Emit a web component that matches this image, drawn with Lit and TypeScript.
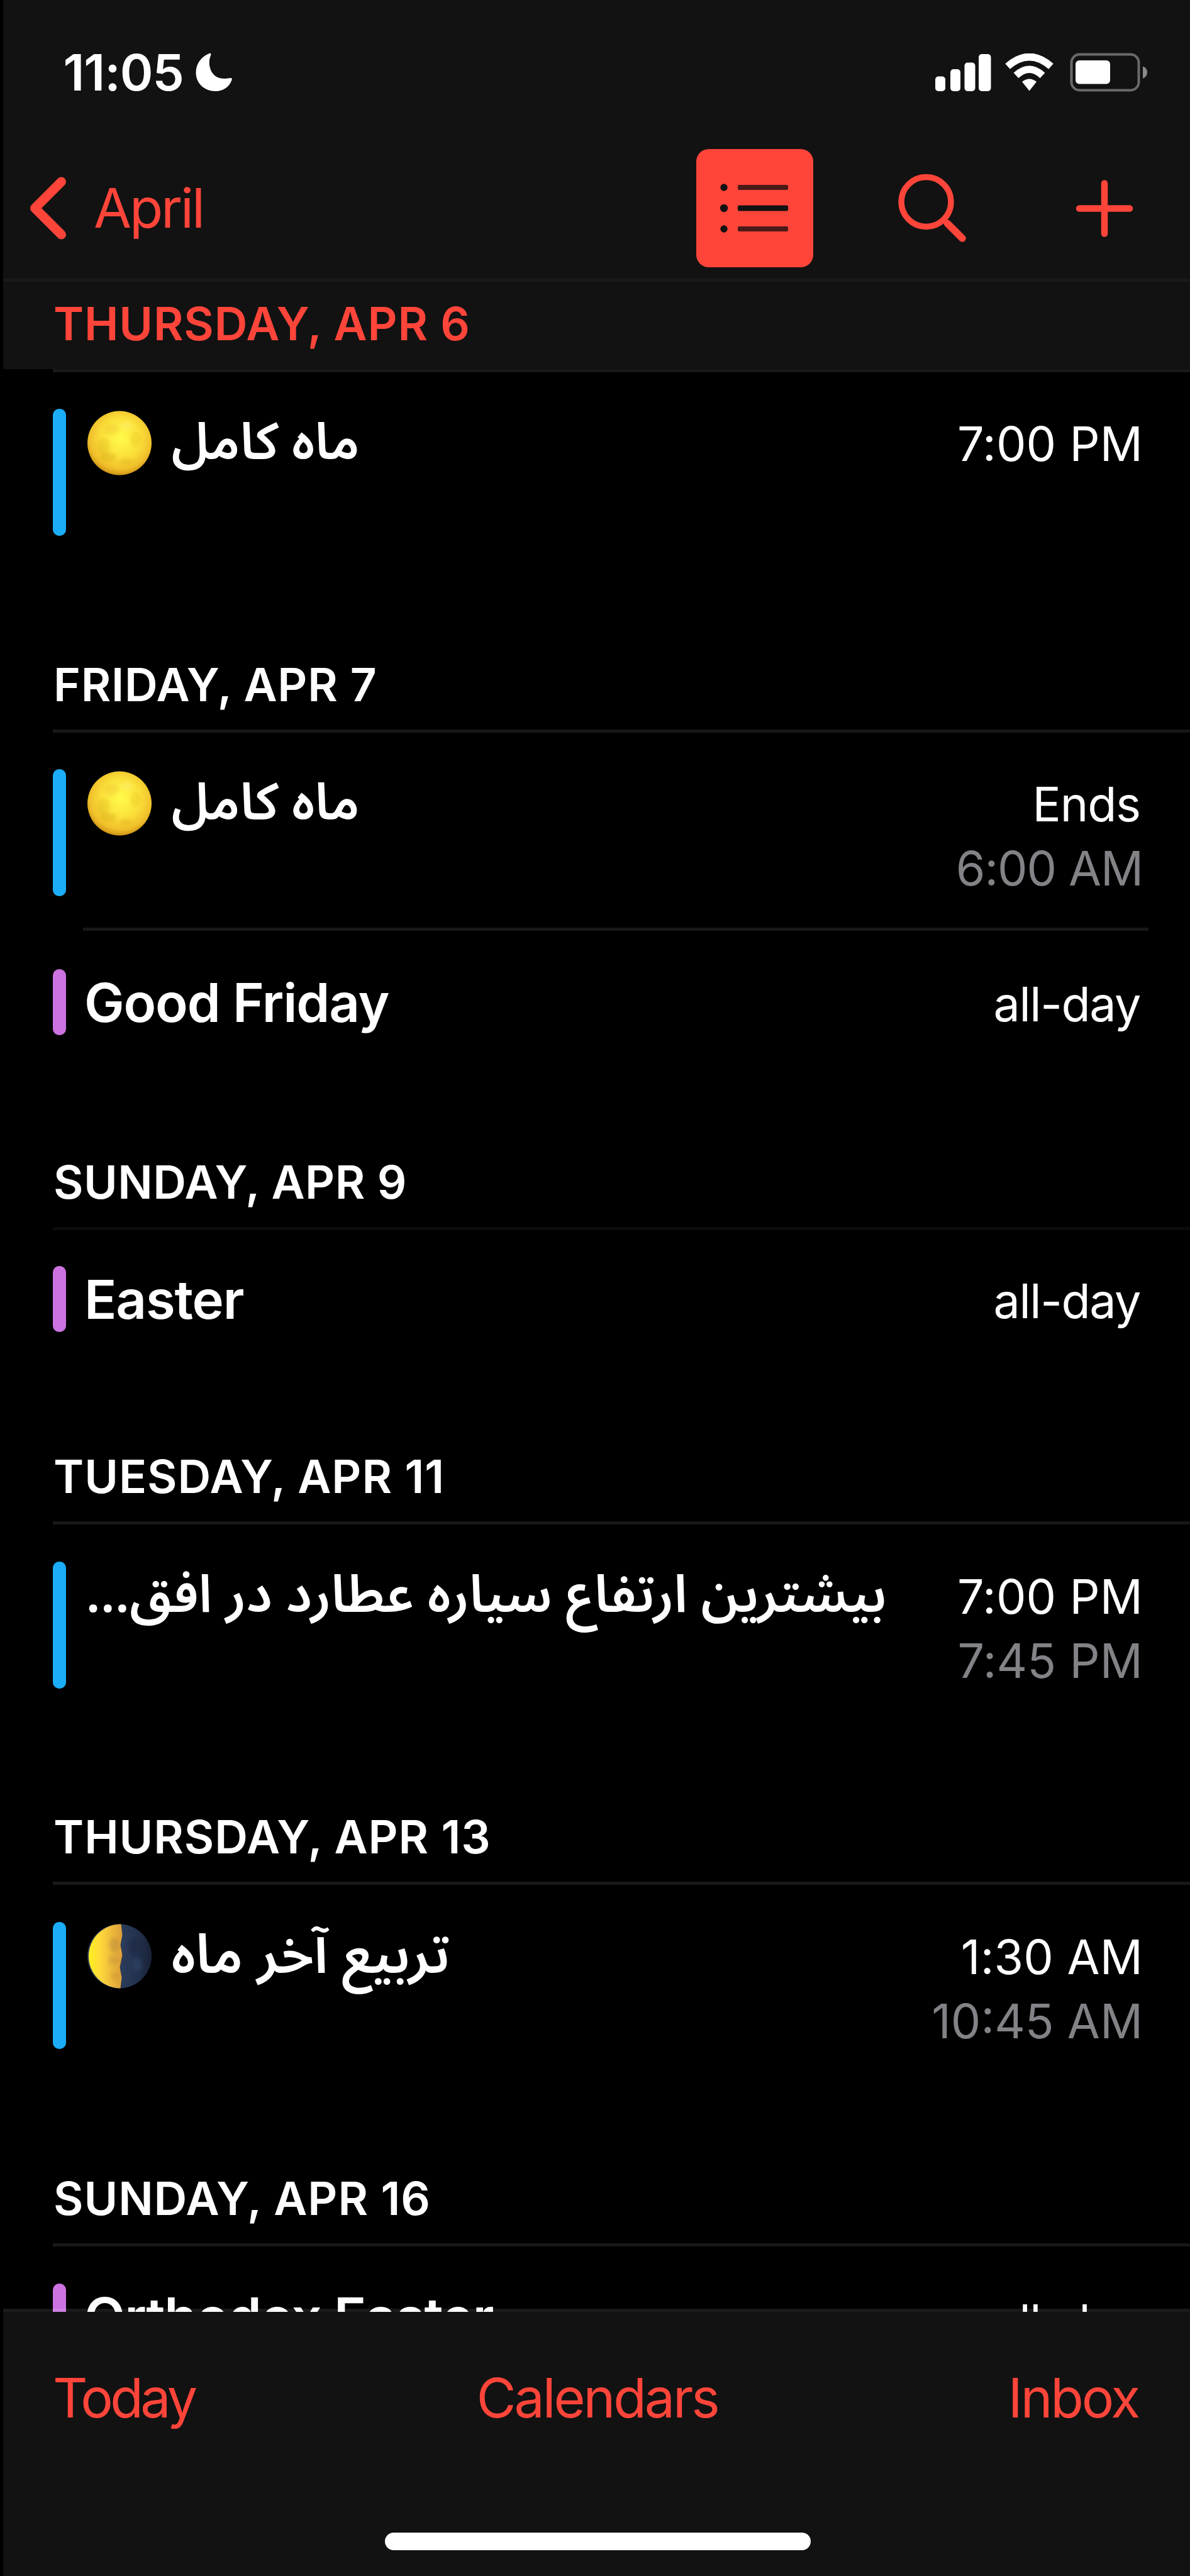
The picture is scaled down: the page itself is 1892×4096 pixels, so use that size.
import { LitElement, html, svg, css, nothing } from "lit";
import { customElement, property } from "lit/decorators.js";
import { classMap } from "lit/directives/class-map.js";
import { styleMap } from "lit/directives/style-map.js";

type Moon = "full" | "last-quarter";

interface TimeLabel {
  text: string;
  tracking: number;
  word?: boolean;
}

interface CalendarEvent {
  title: string;
  rtl?: boolean;
  size: number;
  moon?: Moon;
  color: string;
  height: number;
  inset: number;
  low?: boolean;
  allDay?: boolean;
  times: TimeLabel[];
}

interface Day {
  label: string;
  tracking: number;
  today?: boolean;
  faint?: boolean;
  events: CalendarEvent[];
}

const BLUE = "#1badf8";
const PURPLE = "#cc73e1";
const allDay: TimeLabel[] = [{ text: "all-day", tracking: -1.4, word: true }];

const days: Day[] = [
  {
    label: "THURSDAY, APR 6", tracking: 0.85, today: true,
    events: [
      { title: "ماه کامل", rtl: true, size: 82, moon: "full", color: BLUE, height: 310, inset: 58, times: [{ text: "7:00 PM", tracking: 0.1 }] },
    ],
  },
  {
    label: "FRIDAY, APR 7", tracking: 0.76,
    events: [
      { title: "ماه کامل", rtl: true, size: 82, moon: "full", color: BLUE, height: 310, inset: 58, times: [{ text: "Ends", tracking: -1.1, word: true }, { text: "6:00 AM", tracking: -1.1 }] },
      { title: "Good Friday", size: 85, color: PURPLE, height: 213, inset: 61, allDay: true, times: allDay },
    ],
  },
  {
    label: "SUNDAY, APR 9", tracking: 0.53, faint: true,
    events: [{ title: "Easter", size: 85, color: PURPLE, height: 205, inset: 57, allDay: true, times: allDay }],
  },
  {
    label: "TUESDAY, APR 11", tracking: 1,
    events: [
      { title: "بیشترین ارتفاع سیاره عطارد در افق...", rtl: true, size: 83, color: BLUE, height: 310, inset: 59, times: [{ text: "7:00 PM", tracking: 0.1 }, { text: "7:45 PM", tracking: 0.1 }] },
    ],
  },
  {
    label: "THURSDAY, APR 13", tracking: 0.94,
    events: [
      { title: "تربیع آخر ماه", rtl: true, size: 86.5, moon: "last-quarter", color: BLUE, height: 312, inset: 59, times: [{ text: "1:30 AM", tracking: 0.2 }, { text: "10:45 AM", tracking: 0 }] },
    ],
  },
  {
    label: "SUNDAY, APR 16", tracking: 1,
    events: [{ title: "Orthodox Easter", size: 85, color: PURPLE, height: 215, inset: 59, low: true, allDay: true, times: allDay }],
  },
];

const craters = svg`
  <g filter="url(#soft)">
    <ellipse cx="38" cy="30" rx="12" ry="9" fill="#d9a21b" opacity=".18"/>
    <ellipse cx="63" cy="24" rx="10" ry="7" fill="#fff27a" opacity=".35"/>
    <ellipse cx="26" cy="57" rx="10" ry="13" fill="#c98f12" opacity=".2"/>
    <ellipse cx="34" cy="74" rx="13" ry="7" fill="#b98410" opacity=".22"/>
    <ellipse cx="78" cy="46" rx="9" ry="12" fill="#d19a18" opacity=".18"/>
    <ellipse cx="62" cy="82" rx="10" ry="5" fill="#c08a12" opacity=".18"/>
  </g>`;

@customElement("moon-phase")
export class MoonPhase extends LitElement {
  static styles = css`
    :host { display: block; width: 102px; height: 103px; }
    .disc { display: block; width: 102px; height: 103px; }
  `;
  @property() phase: Moon = "full";

  render() {
    return html`<svg class="disc" viewBox="0 0 103 104">
      <defs>
        <filter id="soft"><feGaussianBlur stdDeviation="2.5"/></filter>
        <radialGradient id="sun" cx=".52" cy=".42" r=".6">
          <stop offset="0" stop-color="#fffb4a"/><stop offset=".5" stop-color="#fbe13b"/>
          <stop offset=".82" stop-color="#efbe2a"/><stop offset="1" stop-color="#c98c12"/>
        </radialGradient>
        <linearGradient id="half" x1="0" y1="0" x2="1" y2="0">
          <stop offset="0" stop-color="#fff01e"/><stop offset=".35" stop-color="#ffd83c"/><stop offset=".95" stop-color="#dea23a"/>
        </linearGradient>
        <linearGradient id="night" x1="0" y1="0" x2="1" y2="0">
          <stop offset=".5" stop-color="#2c3d5c"/><stop offset=".8" stop-color="#22304c"/><stop offset="1" stop-color="#182236"/>
        </linearGradient>
      </defs>
      ${this.phase === "full"
        ? svg`<circle cx="51.5" cy="52" r="51.5" fill="url(#sun)"/>${craters}`
        : svg`<circle cx="51.5" cy="52" r="51.5" fill="url(#night)"/>
          <g filter="url(#soft)">
            <ellipse cx="76" cy="36" rx="9" ry="12" fill="#1a263f" opacity=".6"/>
            <ellipse cx="80" cy="66" rx="8" ry="11" fill="#33466a" opacity=".5"/>
          </g>
          <path d="M54 .5A51.5 51.5 0 1 0 53 103.5L55 86L52 70L56 50L53 34L56 18Z" fill="url(#half)"/>
          <g filter="url(#soft)">
            <ellipse cx="43" cy="34" rx="8" ry="12" fill="#a87a3c" opacity=".35"/>
            <ellipse cx="42" cy="58" rx="9" ry="8" fill="#b08038" opacity=".28"/>
            <ellipse cx="44" cy="84" rx="7" ry="7" fill="#b9822c" opacity=".28"/>
          </g>`}
    </svg>`;
  }
}

@customElement("event-row")
export class EventRow extends LitElement {
  static styles = css`
    :host { display: block; }
    .row { display: flex; align-items: flex-start; box-sizing: border-box; padding: 0 75px 0 84px; }
    .bar { flex: none; width: 20.5px; height: 202px; border-radius: 10px; }
    .bar.short { height: 105px; }
    .title { flex: 1; display: flex; min-width: 0; margin: 11px 0 0 29.5px; line-height: 85px; font-weight: 600; letter-spacing: -1.15px; white-space: nowrap; }
    .title.rtl { margin: 0 0 0 32px; font-family: "Noto Sans Arabic", "Noto Sans", sans-serif; line-height: 80px; letter-spacing: 0; }
    .moon { flex: none; margin: 3px 32px 0 2px; }
    .text { padding-top: 14px; }
    .title:not(.rtl) .text { padding-top: 0; }
    .times { flex: none; display: flex; flex-direction: column; align-items: flex-end; margin-top: 5px; font-size: 75.4px; line-height: 102px; white-space: nowrap; }
    .times.low { margin-top: 10px; }
    .time + .time { color: #828287; }
    .word { margin-right: 4px; }
  `;
  @property({ attribute: false }) event!: CalendarEvent;

  render() {
    const e = this.event;
    return html`<div class="row" style=${styleMap({ height: `${e.height}px`, paddingTop: `${e.inset}px` })}>
      <div class=${classMap({ bar: true, short: !!e.allDay })} style=${styleMap({ background: e.color })}></div>
      <div class=${classMap({ title: true, rtl: !!e.rtl })} style=${styleMap({ fontSize: `${e.size}px` })}>
        ${e.moon ? html`<moon-phase class="moon" phase=${e.moon}></moon-phase>` : nothing}
        <span class="text" dir=${e.rtl ? "rtl" : "ltr"}>${e.title}</span>
      </div>
      <div class=${classMap({ times: true, low: !!e.low })}>
        ${e.times.map((t) => html`<span class=${classMap({ time: true, word: !!t.word })} style=${styleMap({ letterSpacing: `${t.tracking}px` })}>${t.text}</span>`)}
      </div>
    </div>`;
  }
}

@customElement("app-root")
export class AppRoot extends LitElement {
  static styles = css`
    :host {
      display: flex; flex-direction: column; width: 1892px; height: 4096px; overflow: hidden;
      background: #000; color: #fff; font-family: Inter, "Liberation Sans", sans-serif;
    }
    svg { display: block; flex: none; }
    .top { flex: none; margin-left: 5px; background: #121212; border-bottom: 5px solid #1a1a1a; }
    .status { display: flex; align-items: center; height: 229px; box-sizing: border-box; padding: 0 68px 0 95.5px; }
    .clock { font-size: 80px; line-height: 80px; font-weight: 600; letter-spacing: -1px; }
    .dnd { margin-left: 19px; }
    .signal { margin-left: auto; }
    .wifi { margin-left: 21px; }
    .battery { margin-left: 25px; }
    .nav { display: flex; align-items: center; height: 214px; box-sizing: border-box; padding: 0 88px 10px 41px; color: #ff453a; }
    .back { display: flex; align-items: center; }
    .month { margin: 0 0 0 43px; font-size: 87px; line-height: 88px; letter-spacing: -3.1px; }
    .list { display: flex; align-items: center; justify-content: center; width: 186px; height: 188px; margin-left: auto; border-radius: 20px; background: #ff453a; }
    .search { margin-left: 133px; }
    .add { margin-left: 168px; }

    .agenda { flex: none; height: 3228px; overflow: hidden; }
    .day { padding-bottom: 119px; }
    .heading { display: flex; flex-direction: column; height: 144px; }
    .heading.today { margin-left: 5px; background: linear-gradient(#121212, #121212) 0 0 / 100% 139px no-repeat; color: #ff453a; }
    .date { height: 139px; box-sizing: border-box; padding: 31px 0 0 85px; font-size: 73px; line-height: 73px; font-weight: 600; white-space: nowrap; }
    .today .date { padding: 30px 0 0 80px; }
    .rule { height: 5px; margin-left: 84px; background: #181818; }
    .today .rule { margin-left: 79px; }
    .rule.faint { background: #0b0b0b; }
    .divider { height: 5px; margin: 0 66px 0 132px; background: #181818; }

    .toolbar {
      position: relative; flex: none; display: flex; flex-direction: column; align-items: center; height: 425px; box-sizing: border-box;
      margin: -5px 0 0 5px; border-top: 5px solid rgba(255, 255, 255, 0.1); background: #121212; background-clip: padding-box;
    }
    .actions { display: flex; justify-content: space-between; align-self: stretch; padding: 94px 82px 0 79px; color: #ff453a; font-size: 86px; line-height: 86px; }
    .today-link { letter-spacing: -4.6px; }
    .calendars { margin-right: 13px; letter-spacing: -3.1px; }
    .inbox { letter-spacing: -3.2px; }
    .home { width: 677px; height: 28px; margin: 171px 0 0 3px; border-radius: 14px; background: #fff; }
  `;

  private renderStatus() {
    return html`<div class="status">
      <span class="clock">11:05</span>
      <svg class="dnd" width="58" height="62" viewBox="0 0 59 62">
        <path fill="#fff" d="M22 .5C24.5 -.5 25.5 1 24.5 3.500C22 9.500 21.500 16 23 22.500C26.500 37 38 43.500 54.500 40.500C57.500 39.800 59.500 40.500 58.500 43.500C54.500 55 44.500 61.500 32.500 61.500C14 61.500 .5 48.500 .5 31.500C.5 17.500 9 5.500 22 .5Z"/>
      </svg>
      <svg class="signal" width="89" height="60" viewBox="0 0 89 60" fill="#fff">
        <rect x="0" y="36.500" width="16" height="23.500" rx="5"/>
        <rect x="24" y="25" width="16" height="35" rx="5"/>
        <rect x="46.500" y="14.500" width="17" height="45.500" rx="5"/>
        <rect x="69" y="1" width="19.500" height="59" rx="5"/>
      </svg>
      <svg class="wifi" width="79" height="60" viewBox="0 0 79 60">
        <path d="M5 20.500Q39.500 -9.500 74 20.500" fill="none" stroke="#fff" stroke-width="11.500" stroke-linecap="butt"/>
        <path d="M18.500 35Q39.500 15.500 60.500 35" fill="none" stroke="#fff" stroke-width="11.500"/>
        <path d="M28 45Q39.500 36 51 45L39.500 59.500Z" fill="#fff"/>
      </svg>
      <svg class="battery" width="123" height="62" viewBox="0 0 123 62">
        <rect x="2.500" y="2.500" width="107" height="57" rx="13" fill="none" stroke="#6a6a6a" stroke-width="4"/>
        <rect x="9" y="12" width="55" height="37.500" rx="6" fill="#fff"/>
        <path d="M116 21.500Q123 24 123 31Q123 38 116 41Z" fill="#8a8a8a"/>
      </svg>
    </div>`;
  }

  private renderNav() {
    return html`<div class="nav">
      <div class="back">
        <svg width="60" height="102" viewBox="0 0 60 102">
          <path d="M51.500 9L9.500 51L51.500 93" fill="none" stroke="#ff453a" stroke-width="15" stroke-linecap="round" stroke-linejoin="round"/>
        </svg>
        <span class="month">April</span>
      </div>
      <div class="list">
        <svg width="114" height="90" viewBox="0 0 114 90">
          <g fill="#121212">
            <circle cx="8" cy="12" r="5.700"/><circle cx="8" cy="45" r="6.200"/><circle cx="8" cy="78" r="5.700"/>
            <rect x="30" y="40.500" width="80" height="9" rx="2"/>
          </g>
          <g fill="#4a1a18"><rect x="30" y="8" width="80" height="8" rx="2"/><rect x="30" y="74" width="80" height="8" rx="2"/></g>
        </svg>
      </div>
      <svg class="search" width="114" height="120" viewBox="0 0 114 120" fill="none" stroke="#ff453a">
        <circle cx="46.500" cy="50" r="39.500" stroke-width="9.500"/>
        <path d="M75 79L80 84" stroke-width="9.500"/>
        <path d="M80.500 84.500L104 108" stroke-width="11.500" stroke-linecap="round"/>
      </svg>
      <svg class="add" width="96" height="96" viewBox="0 0 96 96">
        <path d="M48 8V88M8 48H88" stroke="#ff453a" stroke-width="10.500" stroke-linecap="round" transform="translate(0 .5)"/>
      </svg>
    </div>`;
  }

  private renderDay(day: Day) {
    return html`<section class="day">
      <div class=${classMap({ heading: true, today: !!day.today })}>
        <div class="date" style=${styleMap({ letterSpacing: `${day.tracking}px` })}>${day.label}</div>
        <div class=${classMap({ rule: true, faint: !!day.faint })}></div>
      </div>
      ${day.events.map((e, i) => html`${i ? html`<div class="divider"></div>` : nothing}<event-row .event=${e}></event-row>`)}
    </section>`;
  }

  render() {
    return html`
      <header class="top">${this.renderStatus()}${this.renderNav()}</header>
      <main class="agenda">${days.map((d) => this.renderDay(d))}</main>
      <footer class="toolbar">
        <nav class="actions">
          <span class="today-link">Today</span><span class="calendars">Calendars</span><span class="inbox">Inbox</span>
        </nav>
        <div class="home"></div>
      </footer>`;
  }
}
